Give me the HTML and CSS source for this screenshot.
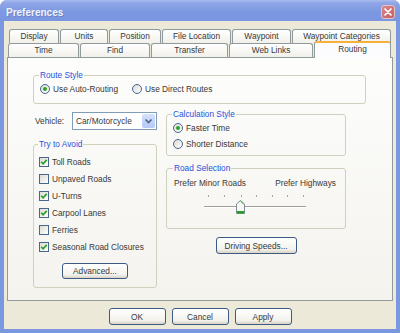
FILE: index.html
```html
<!DOCTYPE html>
<html lang="en">
<head>
    <meta charset="UTF-8">
    <title>Preferences</title>
    <link rel="stylesheet" href="styles.css">
</head>
<body>
    <div class="window">
        <div class="titlebar">
            <span class="title">Preferences</span>
            <span class="close">
                <svg width="14" height="14" viewBox="0 0 14 14"><path d="M4 4l6 6M10 4l-6 6" stroke="#fff" stroke-width="1.7" stroke-linecap="round"/></svg>
            </span>
        </div>
        <div class="client">
            <div class="tabs">
                <div class="tabRow back">
                    <div class="tab w50">Display</div>
                    <div class="tab w48">Units</div>
                    <div class="tab w52">Position</div>
                    <div class="tab w69">File Location</div>
                    <div class="tab w59">Waypoint</div>
                    <div class="tab w99">Waypoint Categories</div>
                </div>
                <div class="tabRow front">
                    <div class="tab w71">Time</div>
                    <div class="tab w70">Find</div>
                    <div class="tab w77">Transfer</div>
                    <div class="tab w84">Web Links</div>
                    <div class="tab w77 active">Routing</div>
                </div>
            </div>
            <div class="panel">
                <fieldset class="group route">
                    <legend>Route Style</legend>
                    <div class="radioRow">
                        <div class="option first"><span class="radio on"></span>Use Auto-Routing</div>
                        <div class="option"><span class="radio"></span>Use Direct Routes</div>
                    </div>
                </fieldset>
                <div class="columns">
                    <div class="col left">
                        <div class="vehicle">
                            <span class="vehicleLabel">Vehicle:</span>
                            <div class="select">
                                <span class="selectText">Car/Motorcycle</span>
                                <span class="selectBtn">
                                    <svg width="13" height="14" viewBox="0 0 13 14"><path d="M3.5 5.5l3 3 3-3" fill="none" stroke="#4d6185" stroke-width="1.6"/></svg>
                                </span>
                            </div>
                        </div>
                        <fieldset class="group avoid">
                            <legend>Try to Avoid</legend>
                            <div class="check"><span class="box on"><svg width="8" height="8" viewBox="0 0 8 8"><path d="M1.2 3.8l1.9 2 3.6-3.9" fill="none" stroke="#21a121" stroke-width="1.6"/></svg></span>Toll Roads</div>
                            <div class="check"><span class="box"></span>Unpaved Roads</div>
                            <div class="check"><span class="box on"><svg width="8" height="8" viewBox="0 0 8 8"><path d="M1.2 3.8l1.9 2 3.6-3.9" fill="none" stroke="#21a121" stroke-width="1.6"/></svg></span>U-Turns</div>
                            <div class="check"><span class="box on"><svg width="8" height="8" viewBox="0 0 8 8"><path d="M1.2 3.8l1.9 2 3.6-3.9" fill="none" stroke="#21a121" stroke-width="1.6"/></svg></span>Carpool Lanes</div>
                            <div class="check"><span class="box"></span>Ferries</div>
                            <div class="check"><span class="box on"><svg width="8" height="8" viewBox="0 0 8 8"><path d="M1.2 3.8l1.9 2 3.6-3.9" fill="none" stroke="#21a121" stroke-width="1.6"/></svg></span>Seasonal Road Closures</div>
                            <button class="btn advanced">Advanced...</button>
                        </fieldset>
                    </div>
                    <div class="col right">
                        <fieldset class="group calc">
                            <legend>Calculation Style</legend>
                            <div class="option row"><span class="radio on"></span>Faster Time</div>
                            <div class="option row"><span class="radio"></span>Shorter Distance</div>
                        </fieldset>
                        <fieldset class="group road">
                            <legend>Road Selection</legend>
                            <div class="ends">
                                <span>Prefer Minor Roads</span>
                                <span>Prefer Highways</span>
                            </div>
                            <svg class="slider" width="110" height="26" viewBox="0 0 110 26">
                                <path d="M8.5 6v2M24.5 6v2M41.5 6v2M56.5 6v2M72.5 6v2M87.5 6v2M103.5 6v2" stroke="#a4a4a0"/>
                                <path d="M4 17.5h102" stroke="#a09e96"/>
                                <path d="M4 18.5h102" stroke="#ffffff"/>
                                <path d="M36.5 24.5V15l4-3.5 4 3.5v9.5z" fill="#f6f6f2" stroke="#7d8c98"/>
                                <path d="M40.5 12.5l3 2.6" stroke="#5ec25e"/>
                                <rect x="37" y="22" width="7" height="2.5" fill="#21a121"/>
                            </svg>
                        </fieldset>
                        <button class="btn speeds">Driving Speeds...</button>
                    </div>
                </div>
            </div>
            <div class="buttons">
                <button class="btn">OK</button>
                <button class="btn">Cancel</button>
                <button class="btn">Apply</button>
            </div>
        </div>
    </div>
</body>
</html>
```
FILE: styles.css
```css
*{
    margin: 0px;
    padding: 0px;
    box-sizing: border-box;
}
body{
    font-family: "Liberation Sans", Arial, sans-serif;
    font-size: 8.3px;
    color: #383838;
    background: #fff;
}
.window{
    width: 400px;
    height: 333px;
    background: #7b97e0;
    border-radius: 7px 7px 0 0;
    overflow: hidden;
}
.titlebar{
    height: 21px;
    padding: 3px 5px 0 6px;
    display: flex;
    align-items: center;
    justify-content: space-between;
    background: linear-gradient(#a9bcef 0px, #8ea6e7 3px, #7d98e2 12px, #7b96e0 21px);
}
.title{
    font-weight: bold;
    font-size: 10px;
    color: #f0f3fb;
    text-shadow: 1px 1px 0 #6a82c4;
}
.close{
    width: 14px;
    height: 14px;
    display: flex;
    border-radius: 3px;
    border: 1px solid #e3c3c6;
    background: linear-gradient(135deg, #d98a8c, #c45f62);
}
.close svg{
    margin: -1px;
}
.client{
    margin: 0 4px;
    height: 308px;
    padding-top: 8px;
    background: #ece9d8;
}

/* tabs */
.tabRow{
    display: flex;
    gap: 1px;
    height: 14px;
}
.tabRow.back{
    padding-left: 5px;
}
.tabRow.front{
    padding-left: 4px;
    align-items: flex-end;
}
.tab{
    height: 14px;
    border: 1px solid #919b9c;
    border-bottom: 0;
    border-radius: 3px 3px 0 0;
    background: linear-gradient(#ffffff, #f1f0ea);
    text-align: center;
    line-height: 12px;
    white-space: nowrap;
}
.tab.active{
    position: relative;
    z-index: 1;
    height: 17px;
    margin-bottom: -1px;
    border-top: 2px solid #f6b13a;
    background: #fcfcfe;
    line-height: 13px;
}
.w48{ width: 48px; }
.w50{ width: 50px; }
.w52{ width: 52px; }
.w59{ width: 59px; }
.w69{ width: 69px; }
.w70{ width: 70px; }
.w71{ width: 71px; }
.w77{ width: 77px; }
.w84{ width: 84px; }
.w99{ width: 99px; }

.panel{
    margin: 0 3px;
    height: 244px;
    padding: 12px 0 0 25px;
    border: 1px solid #919b9c;
    background: linear-gradient(#fdfdfc, #f4f3ee);
}

/* group boxes */
.group{
    border: 1px solid #d0d0bf;
    border-radius: 3px;
    min-width: 0;
}
.group legend{
    color: #2553dc;
    line-height: 11px;
    padding: 0 1px;
    margin-left: -1px;
}
.route{
    width: 333px;
    padding: 2px 6px 8px;
}
.radioRow{
    display: flex;
}
.option{
    display: flex;
    align-items: center;
    gap: 3px;
    height: 12px;
}
.option.first{
    width: 92px;
}
.option.row{
    height: 16px;
}
.radio{
    width: 10px;
    height: 10px;
    border-radius: 50%;
    border: 1px solid #46678f;
    background: linear-gradient(135deg, #dcdad2, #ffffff);
    display: flex;
    align-items: center;
    justify-content: center;
}
.radio.on::after{
    content: "";
    width: 4px;
    height: 4px;
    border-radius: 50%;
    background: #2aa52a;
}

.columns{
    display: flex;
    gap: 9px;
    margin-top: 5px;
}
.col.left{
    width: 124px;
    padding-top: 3px;
}
.col.right{
    width: 180px;
}
.vehicle{
    display: flex;
    align-items: center;
    height: 18px;
}
.vehicleLabel{
    width: 39px;
    padding-left: 2px;
}
.select{
    width: 85px;
    height: 18px;
    border: 1px solid #7f9db9;
    background: #fff;
    display: flex;
    align-items: center;
    justify-content: space-between;
    padding: 0 1px 0 3px;
}
.selectBtn{
    width: 13px;
    height: 14px;
    display: flex;
    border-radius: 2px;
    background: linear-gradient(#d4e0fd, #b4c8f6);
}

.avoid{
    margin-top: 9px;
    padding: 3px 5px 8px;
}
.check{
    display: flex;
    align-items: center;
    gap: 3px;
    height: 17px;
}
.box{
    width: 10px;
    height: 10px;
    border: 1px solid #46678f;
    background: linear-gradient(135deg, #dcdad2, #ffffff);
    display: flex;
}

.btn{
    display: block;
    height: 17px;
    font: inherit;
    color: #383838;
    border: 1px solid #3d5a82;
    border-radius: 3px;
    background: linear-gradient(#ffffff, #f3f2ec 75%, #d8d3c8);
}
.advanced{
    width: 66px;
    height: 16px;
    margin: 8px auto 0;
}

.calc{
    padding: 0 6px 3px;
}
.road{
    margin-top: 7px;
    padding: 4px 9px 13px 7px;
}
.ends{
    display: flex;
    justify-content: space-between;
    line-height: 11px;
}
.slider{
    display: block;
    margin: 0 auto;
}
.speeds{
    width: 81px;
    margin: 8px auto 0;
}

.buttons{
    display: flex;
    justify-content: center;
    gap: 6px;
    margin-top: 7px;
}
.buttons .btn{
    width: 57px;
}
```
